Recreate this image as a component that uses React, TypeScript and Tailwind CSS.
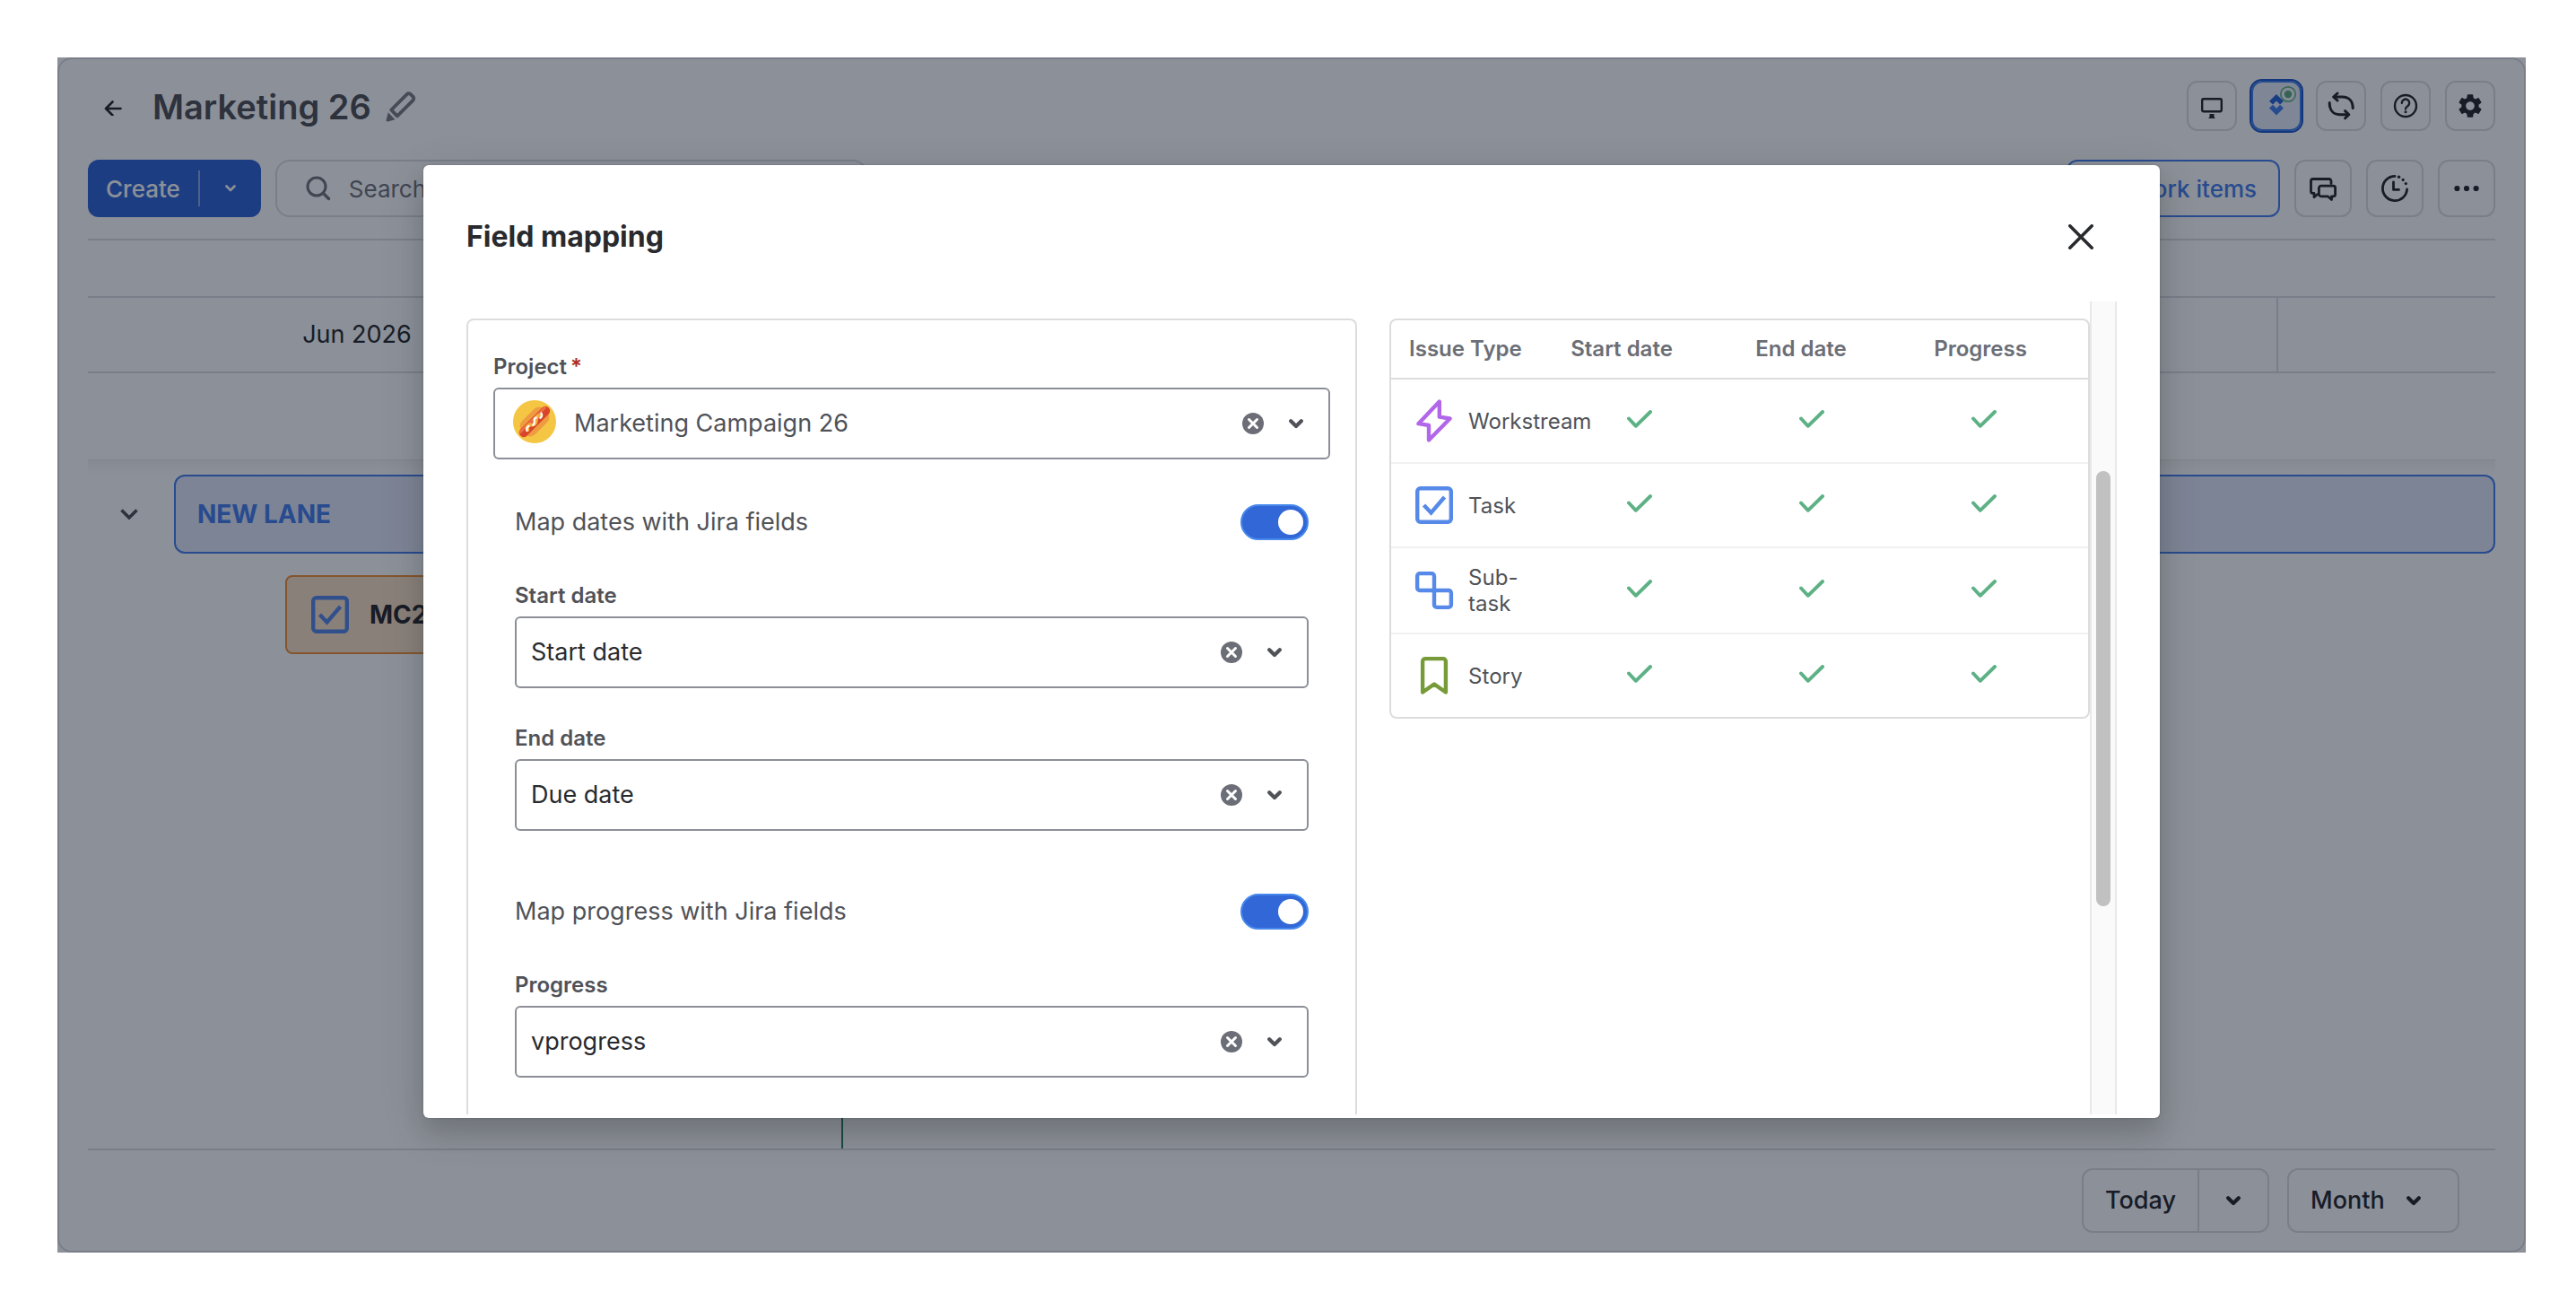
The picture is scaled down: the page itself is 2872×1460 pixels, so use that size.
import { useState } from 'react'
import type { ReactNode } from 'react'
import { MdSettings } from 'react-icons/md'

type IssueType = {
  name: string
  icon: ReactNode
}

const strokeProps = {
  fill: 'none',
  stroke: 'currentColor',
  strokeLinecap: 'round' as const,
  strokeLinejoin: 'round' as const,
}

function MonitorIcon() {
  return (
    <svg viewBox="0 0 32 32" className="size-8 shrink-0" aria-hidden="true">
      <rect x="5.2" y="8.2" width="21.6" height="14" rx="1.6" {...strokeProps} strokeWidth="2.4" />
      <path d="M13.5 25h5v3.4l1.5 1.6h-8l1.5-1.6z" fill="currentColor" />
    </svg>
  )
}

function JiraIcon() {
  return (
    <svg viewBox="0 0 32 32" className="size-8 shrink-0 overflow-visible" aria-hidden="true">
      <path d="M16 3l8 7.8-4 3.8-4-4-4 4-4-3.8z" fill="#2a66d9" />
      <path d="M16 26.4l-8-7.8 4-3.8 4 4 4-4 4 3.8z" fill="#4680ee" />
      <circle cx="29" cy="3" r="8.2" fill="#f1f4fb" stroke="#6ab58a" strokeWidth="1.7" />
      <circle cx="29" cy="3" r="4.2" fill="#5eae84" />
    </svg>
  )
}

function SyncIcon() {
  return (
    <svg viewBox="0 0 32 32" className="size-8 shrink-0" aria-hidden="true">
      <g {...strokeProps} strokeWidth="3">
        <path d="M8 6h9.5C25 6 29.2 11 29.2 18.6" />
        <path d="M12 2L7.8 6l4.2 4" />
        <path d="M3.2 12.4C3.2 20 7 25.7 14.5 25.7H24" />
        <path d="M20.6 21.6l4.2 4.1-4.2 4.1" />
      </g>
    </svg>
  )
}

function HelpIcon() {
  return (
    <svg viewBox="0 0 32 32" className="size-8 shrink-0" aria-hidden="true">
      <circle cx="16" cy="16" r="12" {...strokeProps} strokeWidth="2.4" />
      <path d="M11.8 12.8a4.2 4.2 0 1 1 6.6 3.4c-1.4 1-2.4 1.6-2.4 3.2" {...strokeProps} strokeWidth="2.4" />
      <circle cx="16" cy="22.8" r="1.5" fill="currentColor" />
    </svg>
  )
}

function ChatIcon() {
  return (
    <svg viewBox="0 0 32 32" className="size-8 shrink-0" aria-hidden="true">
      <g {...strokeProps} strokeWidth="2.8">
        <path d="M25 10.5V7.7a2.2 2.2 0 0 0-2.2-2.2H4.7a2.2 2.2 0 0 0-2.2 2.2v11.5a2.2 2.2 0 0 0 2.2 2.2H6v4.4l3.4-3" />
        <path d="M13.7 13.2h13.6a2.3 2.3 0 0 1 2.3 2.3v7a2.3 2.3 0 0 1-2.3 2.3h-1.8v3.7l-4.3-3.7h-7.5a2.3 2.3 0 0 1-2.3-2.3v-7a2.3 2.3 0 0 1 2.3-2.3z" />
      </g>
    </svg>
  )
}

function HistoryIcon() {
  return (
    <svg viewBox="0 0 32 32" className="size-8 shrink-0" aria-hidden="true">
      <path d="M16 2.4A13.6 13.6 0 1 0 29.6 17" {...strokeProps} strokeWidth="2.8" />
      <path d="M14.5 9v8.4h6" {...strokeProps} strokeWidth="2.8" />
      <g fill="currentColor">
        <circle cx="20.6" cy="3.3" r="1.7" />
        <circle cx="25.2" cy="6.4" r="1.6" />
        <circle cx="28.3" cy="10.6" r="1.6" />
      </g>
    </svg>
  )
}

function MoreIcon() {
  return (
    <svg viewBox="0 0 32 32" className="size-8 shrink-0" fill="currentColor" aria-hidden="true">
      <circle cx="5.4" cy="16" r="3.1" />
      <circle cx="16" cy="16" r="3.1" />
      <circle cx="26.6" cy="16" r="3.1" />
    </svg>
  )
}

function ChevronIcon() {
  return (
    <svg viewBox="0 0 16 16" className="size-4 shrink-0" aria-hidden="true">
      <path d="M2.2 5.2L8 11l5.8-5.8" {...strokeProps} strokeWidth="4.2" />
    </svg>
  )
}

function ClearIcon() {
  return (
    <svg viewBox="0 0 24 24" className="size-6" aria-hidden="true">
      <circle cx="12" cy="12" r="12" fill="#6b6e76" />
      <path d="M7.5 7.5l9 9M16.5 7.5l-9 9" fill="none" stroke="#fff" strokeWidth="3" strokeLinecap="round" />
    </svg>
  )
}

function CheckIcon() {
  return (
    <svg viewBox="0 0 28 24" className="h-6 w-7 text-[#5db185]" role="img" aria-label="Mapped">
      <path d="M2 9.5l7.8 8.3L26 2" {...strokeProps} strokeWidth="3.9" />
    </svg>
  )
}

function TaskIcon() {
  return (
    <svg viewBox="0 0 48 48" className="size-12 shrink-0 text-[#5789e8]" aria-hidden="true">
      <rect x="5.2" y="5.2" width="37.6" height="37.6" rx="3.5" fill="none" stroke="currentColor" strokeWidth="4.4" />
      <path d="M12.5 24l8 8.5L35.5 15" fill="none" stroke="currentColor" strokeWidth="4.4" />
    </svg>
  )
}

function WorkstreamIcon() {
  return (
    <svg viewBox="0 0 48 48" className="size-12 shrink-0 text-[#b267ea]" aria-hidden="true">
      <path d="M29.8 2.5v17.2l11.8 1.8L18 45.5V29L6.4 27.2z" {...strokeProps} strokeWidth="4.4" />
    </svg>
  )
}

function SubtaskIcon() {
  return (
    <svg viewBox="0 0 48 48" className="size-12 shrink-0 text-[#5789e8]" aria-hidden="true">
      <g fill="none" stroke="currentColor" strokeWidth="4.4">
        <path d="M8 5.1h13.1A2.9 2.9 0 0 1 24 8v16H8a2.9 2.9 0 0 1-2.9-2.9V8A2.9 2.9 0 0 1 8 5.1z" />
        <path d="M24 24h16a2.9 2.9 0 0 1 2.9 2.9V40a2.9 2.9 0 0 1-2.9 2.9H26.9A2.9 2.9 0 0 1 24 40z" />
      </g>
    </svg>
  )
}

function StoryIcon() {
  return (
    <svg viewBox="0 0 48 48" className="size-12 shrink-0 text-[#779b39]" aria-hidden="true">
      <path d="M11.1 42.5V8A2.9 2.9 0 0 1 14 5.1h20A2.9 2.9 0 0 1 36.9 8v34.5L24 33.5z" {...strokeProps} strokeWidth="4.4" />
    </svg>
  )
}

function HotdogAvatar() {
  return (
    <svg viewBox="0 0 48 48" className="size-12 shrink-0" aria-hidden="true">
      <circle cx="24" cy="24" r="24" fill="#f5c644" />
      <g transform="rotate(-45 24 24)" strokeLinecap="round">
        <rect x="6" y="13.5" width="36" height="21" rx="9" fill="#ef9c40" />
        <rect x="2" y="19" width="44" height="10" rx="4.5" fill="#d8452b" />
        <path d="M5 21h38" stroke="#ee6f42" strokeWidth="3" />
        <path d="M12 25c2.5-4 5-3.5 7-1s5 2.500 7.500 0 5-2.500 8 0" fill="none" stroke="#f7b03e" strokeWidth="4" />
        <path d="M11 25c1.500-2.500 3-3 5-2M20 25.500c2 .5 3-.5 4.500-2.500s3-1.500 4-1M31.500 25.500c2 .5 3.500-.5 4.500-3" fill="none" stroke="#fff" strokeWidth="2.2" />
      </g>
    </svg>
  )
}

const issueTypes: IssueType[] = [
  { name: 'Workstream', icon: <WorkstreamIcon /> },
  { name: 'Task', icon: <TaskIcon /> },
  { name: 'Sub-task', icon: <SubtaskIcon /> },
  { name: 'Story', icon: <StoryIcon /> },
]

function IconButton({ label, size, children }: { label: string; size: 'md' | 'lg'; children: ReactNode }) {
  return (
    <button
      type="button"
      aria-label={label}
      className={`flex items-center justify-center rounded-xl border-2 border-[#dddee1] text-[#292a2e] ${
        size === 'md' ? 'size-14' : 'size-16'
      }`}
    >
      {children}
    </button>
  )
}

function SelectField({
  id,
  label,
  value,
  required,
  icon,
}: {
  id: string
  label: string
  value: string
  required?: boolean
  icon?: ReactNode
}) {
  const [selected, setSelected] = useState(value)

  return (
    <div>
      <label htmlFor={id} className="mb-1.5 block text-2xl leading-[34px] font-semibold text-[#505258]">
        {label}
        {required && <span className="ml-1 text-[#ae2e24]">*</span>}
      </label>
      <div className="flex h-20 items-center rounded-md border-2 border-[#8c8f97] pr-7 pl-4">
        {icon && <div className="mr-5 ml-1 pb-1">{icon}</div>}
        <select
          id={id}
          value={selected}
          onChange={e => setSelected(e.target.value)}
          className={`h-full min-w-0 flex-1 appearance-none bg-transparent text-[27px] outline-none ${
            icon ? 'text-[#505258]' : 'text-[#292a2e]'
          }`}
        >
          <option value="" />
          <option value={value}>{value}</option>
        </select>
        <button type="button" aria-label={`Clear ${label}`} onClick={() => setSelected('')} className="mr-7">
          <ClearIcon />
        </button>
        <span className="text-[#505258]">
          <ChevronIcon />
        </span>
      </div>
    </div>
  )
}

function ToggleRow({ id, label }: { id: string; label: string }) {
  const [checked, setChecked] = useState(true)

  return (
    <div className="flex h-10 items-center justify-between">
      <label htmlFor={id} className="text-[27px] leading-10 text-[#505258]">
        {label}
      </label>
      <input
        id={id}
        type="checkbox"
        role="switch"
        checked={checked}
        onChange={e => setChecked(e.target.checked)}
        className="flex h-10 w-[76px] appearance-none items-center rounded-full border-2 border-[#4688ec] bg-[#8c8f97] px-1 before:size-7 before:rounded-full before:bg-white checked:justify-end checked:bg-[#3167d6]"
      />
    </div>
  )
}

function IssueTypeTable() {
  return (
    <table className="block overflow-hidden rounded-lg border-2 border-[#dddddf]">
      <thead className="block">
        <tr className="grid h-[66px] grid-cols-[1fr_200px_200px_200px] items-center border-b-2 border-[#dddddf] pr-5 text-2xl font-semibold text-[#6b6e76]">
          <th className="pl-5 text-left font-semibold whitespace-nowrap">Issue Type</th>
          <th className="font-semibold">Start date</th>
          <th className="font-semibold">End date</th>
          <th className="font-semibold">Progress</th>
        </tr>
      </thead>
      <tbody className="block">
        {issueTypes.map(type => (
          <tr
            key={type.name}
            className="grid min-h-[94px] grid-cols-[1fr_192px_192px_192px] items-center border-b-2 border-[#f0f0f1] pr-5 last:min-h-[92px] last:border-b-0"
          >
            <td className="flex items-center gap-3.5 py-[18px] pl-6">
              {type.icon}
              <span className="w-20 text-2xl leading-[29px] text-[#505258]">{type.name}</span>
            </td>
            <td className="flex justify-center">
              <CheckIcon />
            </td>
            <td className="flex justify-center">
              <CheckIcon />
            </td>
            <td className="flex justify-center">
              <CheckIcon />
            </td>
          </tr>
        ))}
      </tbody>
    </table>
  )
}

function FieldMappingModal() {
  return (
    <div
      role="dialog"
      aria-modal="true"
      aria-labelledby="modal-title"
      className="flex min-w-0 flex-1 flex-col rounded-md bg-white pb-1 shadow-[0_16px_24px_rgba(30,31,33,0.15),0_0_2px_rgba(30,31,33,0.31),0_12px_48px_rgba(30,31,33,0.15)]"
    >
      <div className="flex h-[152px] shrink-0 items-center justify-between pt-2 pr-[60px] pl-12">
        <h2 id="modal-title" className="text-[32px] leading-10 font-bold text-[#292a2e]">
          Field mapping
        </h2>
        <button type="button" aria-label="Close" className="flex size-14 items-center justify-center text-[#292a2e]">
          <svg viewBox="0 0 28 28" className="size-7" aria-hidden="true">
            <path d="M1.8 1.8l24.4 24.4M26.2 1.8L1.8 26.2" {...strokeProps} strokeWidth="3.6" />
          </svg>
        </button>
      </div>
      <div className="flex min-h-0 flex-1 overflow-hidden pr-12 pl-12">
        <div className="grid min-w-0 flex-1 grid-cols-[992fr_780fr] items-start gap-9 pt-[19px]">
          <form className="rounded-lg border-2 border-[#dddddf] px-7 pt-[35px] pb-28">
            <SelectField id="project" label="Project" value="Marketing Campaign 26" required icon={<HotdogAvatar />} />
            <div className="mt-[50px] px-6">
              <ToggleRow id="map-dates" label="Map dates with Jira fields" />
              <div className="mt-[45px] mb-[70px] flex flex-col gap-[39px]">
                <SelectField id="start-date" label="Start date" value="Start date" />
                <SelectField id="end-date" label="End date" value="Due date" />
              </div>
              <ToggleRow id="map-progress" label="Map progress with Jira fields" />
              <div className="mt-[45px]">
                <SelectField id="progress" label="Progress" value="vprogress" />
              </div>
            </div>
          </form>
          <IssueTypeTable />
        </div>
        <div className="w-[30px] shrink-0 border-x-2 border-[#e8e8e8] bg-[#fafafa] pt-[189px]" aria-hidden="true">
          <div className="mx-auto h-[485px] w-4 rounded-full bg-[#c1c1c1]" />
        </div>
      </div>
    </div>
  )
}

function BoardHeader() {
  return (
    <header>
      <div className="flex h-14 items-center justify-between">
        <div className="flex items-center pt-0.5">
          <button type="button" aria-label="Back" className="flex size-14 items-center justify-center text-[#292a2e]">
            <svg viewBox="0 0 20 20" className="size-5" aria-hidden="true">
              <path d="M18.5 12H2.5M9.5 4.5L2 12l7.5 7.5" {...strokeProps} strokeWidth="2.6" />
            </svg>
          </button>
          <h1 className="ml-4 text-[38px] leading-[48px] font-semibold text-[#505258]">Marketing 26</h1>
          <button type="button" aria-label="Rename board" className="ml-4 text-[#7d7f87]">
            <svg viewBox="0 0 34 34" className="size-[34px]" aria-hidden="true">
              <path d="M6.2 20.5L23.6 3.1a3 3 0 0 1 4.2 0l2.6 2.6a3 3 0 0 1 0 4.2L12.9 27.3z" {...strokeProps} strokeWidth="3.8" />
              <path d="M2.8 23.2l7.6 8-8 2.2a1.4 1.4 0 0 1-1.8-1.7z" fill="currentColor" />
            </svg>
          </button>
        </div>
        <div className="flex gap-4">
          <IconButton label="Presentation mode" size="md">
            <MonitorIcon />
          </IconButton>
          <button
            type="button"
            aria-label="Jira integration"
            aria-pressed="true"
            className="flex size-14 items-center justify-center rounded-xl border-2 border-[#4282ee] bg-[#e8eefb] outline-2 outline-[#1f58cc]"
          >
            <JiraIcon />
          </button>
          <IconButton label="Sync" size="md">
            <SyncIcon />
          </IconButton>
          <IconButton label="Help" size="md">
            <HelpIcon />
          </IconButton>
          <IconButton label="Settings" size="md">
            <MdSettings size={32} />
          </IconButton>
        </div>
      </div>

      <div className="mt-8 flex h-16 items-center justify-between">
        <div className="flex items-center gap-4">
          <div className="flex h-16 items-center rounded-xl bg-[#3367d6] text-white">
            <button type="button" className="h-full px-5 text-[26px] font-medium">
              Create
            </button>
            <span className="h-10 w-0.5 bg-[#8fa9e6]" />
            <button type="button" aria-label="More create options" className="flex h-full w-[68px] items-center justify-center">
              <svg viewBox="0 0 12 12" className="size-3" aria-hidden="true">
                <path d="M1.5 3.5L6 8l4.5-4.5" {...strokeProps} strokeWidth="2.6" />
              </svg>
            </button>
          </div>
          <div className="flex h-16 w-[660px] items-center gap-5 rounded-2xl border-2 border-[#dddee1] px-8">
            <svg viewBox="0 0 28 28" className="size-7 shrink-0 text-[#73757e]" aria-hidden="true">
              <circle cx="12" cy="12" r="10" {...strokeProps} strokeWidth="3" />
              <path d="M19.5 19.5l6 6" {...strokeProps} strokeWidth="3.4" />
            </svg>
            <input
              type="search"
              aria-label="Search"
              placeholder="Search"
              className="min-w-0 flex-1 bg-transparent text-[26px] outline-none placeholder:text-[#73757e]"
            />
          </div>
        </div>
        <div className="flex gap-4">
          <button
            type="button"
            className="h-16 w-[238px] rounded-xl border-2 border-[#4680ee] pr-6 text-right text-[26px] font-medium text-[#4680ee]"
          >
            Work items
          </button>
          <IconButton label="Comments" size="lg">
            <ChatIcon />
          </IconButton>
          <IconButton label="History" size="lg">
            <HistoryIcon />
          </IconButton>
          <IconButton label="More" size="lg">
            <MoreIcon />
          </IconButton>
        </div>
      </div>
    </header>
  )
}

function Board() {
  return (
    <main className="mt-6 flex flex-1 flex-col">
      <div className="h-16 border-t-2 border-[#dddee1]" />
      <div className="flex h-[86px] border-y-2 border-[#dddee1] text-[27px] text-[#292a2e]">
        <div className="flex w-[600px] items-center justify-center">Jun 2026</div>
        <div className="flex-1 border-l-2 border-[#dddee1]" />
        <div className="flex-1 border-l-2 border-[#dddee1]" />
        <div className="flex-1 border-l-2 border-[#dddee1]" />
        <div className="w-[244px] border-l-2 border-[#dddee1]" />
      </div>

      <div className="relative mt-24 flex-1 border-t border-[#e9e9eb] bg-linear-to-b from-[#f3f3f5] to-white to-[16px] pt-4">
        <div className="flex h-[88px] items-center">
          <button type="button" aria-label="Collapse lane" className="mr-1 flex w-[92px] justify-center text-[#505258]">
            <svg viewBox="0 0 20 20" className="size-5" aria-hidden="true">
              <path d="M1.5 5.5L10 14l8.5-8.5" fill="none" stroke="currentColor" strokeWidth="3.6" />
            </svg>
          </button>
          <div className="flex h-full flex-1 items-center rounded-xl border-2 border-[#4680ee] bg-[#e3e9fa] px-6 text-[28px] font-bold text-[#4680ee]">
            NEW LANE
          </div>
        </div>
        <div className="mt-6 ml-[220px] flex h-[88px] w-[400px] items-center gap-5 rounded-lg border-2 border-[#f0923a] bg-[#fce2c8] px-6">
          <TaskIcon />
          <span className="text-[28px] font-bold text-[#292a2e]">MC26-1</span>
        </div>
        <div className="absolute inset-y-0 left-[840px] w-0.5 bg-[#2f8060]" />
      </div>
    </main>
  )
}

function BoardFooter() {
  return (
    <footer className="flex justify-end gap-5 border-t-2 border-[#dddee1] py-5 pr-10 text-[27px] font-medium text-[#292a2e]">
      <div className="flex h-[72px] rounded-xl border-2 border-[#dddee1]">
        <button type="button" className="px-6">
          Today
        </button>
        <button
          type="button"
          aria-label="Jump to date"
          className="flex w-[78px] items-center justify-center border-l-2 border-[#dddee1]"
        >
          <ChevronIcon />
        </button>
      </div>
      <button type="button" className="flex h-[72px] w-48 items-center gap-6 rounded-xl border-2 border-[#dddee1] px-6">
        Month
        <ChevronIcon />
      </button>
    </footer>
  )
}

export default function App() {
  return (
    <div className="flex min-h-screen bg-white py-16 pr-14 pl-16 font-['Inter',sans-serif]">
      <div className="relative flex min-w-0 flex-1 flex-col rounded-2xl border-2 border-[#dddee1] px-8 pt-6">
        <BoardHeader />
        <Board />
        <BoardFooter />
        <div className="absolute -inset-0.5 flex bg-[#050c1f]/46 px-[408px] pt-[120px] pb-[150px]">
          <FieldMappingModal />
        </div>
      </div>
    </div>
  )
}
